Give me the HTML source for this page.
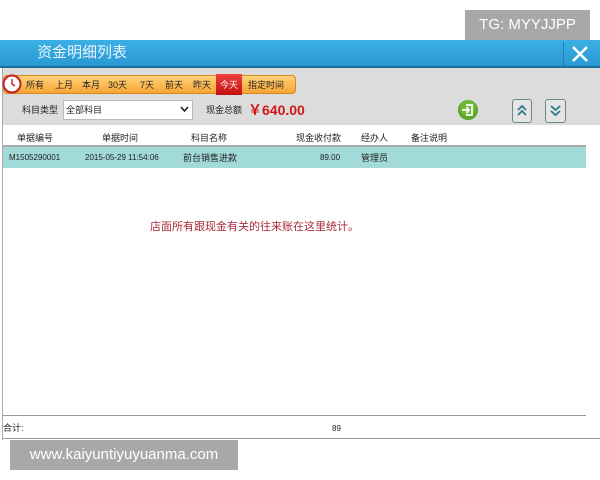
<!DOCTYPE html>
<html><head><meta charset="utf-8"><style>
*{margin:0;padding:0;box-sizing:border-box}
body{width:600px;height:480px;background:#fff;position:relative;overflow:hidden;font-family:"Liberation Sans","Noto Sans CJK SC",sans-serif;color:#222}
.a{position:absolute;white-space:nowrap}
.t{font-size:9px}
</style></head><body>
<div class="a" style="left:465px;top:10px;width:125px;height:30px;background:#a8a8a8;color:#fff;font-size:15px;line-height:30px;text-align:center">TG: MYYJJPP</div>
<div class="a" style="left:0;top:40px;width:600px;height:28px;background:linear-gradient(#3cb0e4,#2898d2);border-bottom:2px solid #1a6fa0"></div>
<div class="a" style="left:37px;top:43px;font-size:15px;color:#e8f4ff;line-height:20px">资金明细列表</div>
<div class="a" style="left:563px;top:42px;width:1px;height:24px;background:#1f80b8"></div>
<svg class="a" style="left:570px;top:44px" width="20" height="20"><path d="M3 3L17 17M17 3L3 17" stroke="#fff" stroke-width="2.6"/></svg>
<div class="a" style="left:2px;top:68px;width:598px;height:57px;background:#dcdcdc"></div>
<div class="a" style="left:2px;top:68px;width:1px;height:372px;background:#aaa"></div>
<div class="a" style="left:3px;top:75px;width:293px;height:19px;border-radius:4px;background:linear-gradient(#ffd27a,#f7a534);border:1px solid #d88a20"></div>
<div class="a" style="left:216px;top:74px;width:26px;height:21px;background:linear-gradient(#f04040,#c01010)"></div>
<svg class="a" style="left:2px;top:74px" width="20" height="20"><circle cx="10" cy="10" r="8.5" fill="#fff" stroke="#c02020" stroke-width="2"/><path d="M10 5V10L13 12" stroke="#c02020" stroke-width="1.4" fill="none"/></svg>
<div class="a t" style="top:79px;left:26px;line-height:12px;color:#222">所有</div>
<div class="a t" style="top:79px;left:55px;line-height:12px">上月</div>
<div class="a t" style="top:79px;left:82px;line-height:12px">本月</div>
<div class="a t" style="top:79px;left:108px;line-height:12px">30天</div>
<div class="a t" style="top:79px;left:140px;line-height:12px">7天</div>
<div class="a t" style="top:79px;left:165px;line-height:12px">前天</div>
<div class="a t" style="top:79px;left:193px;line-height:12px">昨天</div>
<div class="a t" style="top:79px;left:220px;line-height:12px;color:#fff">今天</div>
<div class="a t" style="top:79px;left:248px;line-height:12px">指定时间</div>
<div class="a t" style="top:104px;left:22px;line-height:12px">科目类型</div>
<div class="a" style="left:63px;top:100px;width:130px;height:20px;background:#fff;border:1px solid #bbb"></div>
<div class="a t" style="top:104px;left:66px;line-height:12px">全部科目</div>
<svg class="a" style="left:180px;top:106px" width="9" height="7"><path d="M1 1L4.5 5L8 1" stroke="#222" stroke-width="1.6" fill="none"/></svg>
<div class="a t" style="top:104px;left:206px;line-height:12px">现金总额</div>
<div class="a" style="top:102px;left:248px;font-size:14px;font-weight:bold;color:#d01818;line-height:16px">￥640.00</div>
<svg class="a" style="left:457px;top:99px" width="22" height="22"><circle cx="11" cy="11" r="10" fill="#5aa52a"/><circle cx="11" cy="9" r="8" fill="#7cc442" opacity=".6"/><path d="M9 6H15V16H9M5 11H12M9.5 8L12 11L9.5 14" stroke="#fff" stroke-width="1.8" fill="none"/></svg>
<div class="a" style="left:512px;top:99px;width:20px;height:24px;border:1px solid #6a8a8a;border-radius:3px;background:#e4e4e4"></div>
<svg class="a" style="left:512px;top:99px" width="20" height="24"><path d="M6 11L10 7L14 11M6 16L10 12L14 16" stroke="#2a7a8a" stroke-width="1.8" fill="none"/></svg>
<div class="a" style="left:545px;top:99px;width:21px;height:24px;border:1px solid #6a8a8a;border-radius:3px;background:#e4e4e4"></div>
<svg class="a" style="left:545px;top:99px" width="21" height="24"><path d="M6 7L10.5 11L15 7M6 12L10.5 16L15 12" stroke="#2a7a8a" stroke-width="1.8" fill="none"/></svg>
<div class="a t" style="top:131px;left:17px">单据编号</div>
<div class="a t" style="top:131px;left:102px">单据时间</div>
<div class="a t" style="top:131px;left:191px">科目名称</div>
<div class="a t" style="top:131px;left:296px">现金收付款</div>
<div class="a t" style="top:131px;left:361px">经办人</div>
<div class="a t" style="top:131px;left:411px">备注说明</div>
<div class="a" style="left:3px;top:145px;width:583px;height:2px;background:#aaa"></div>
<div class="a" style="left:3px;top:147px;width:583px;height:21px;background:#a2d9d9"></div>
<div class="a" style="top:152px;left:9px;font-size:8px;line-height:11px">M1505290001</div>
<div class="a" style="top:152px;left:85px;font-size:8px;line-height:11px">2015-05-29 11:54:06</div>
<div class="a t" style="top:152px;left:183px;line-height:12px">前台销售进款</div>
<div class="a" style="top:152px;left:320px;font-size:8px;line-height:11px">89.00</div>
<div class="a t" style="top:152px;left:361px;line-height:12px">管理员</div>
<div class="a" style="top:220px;left:150px;font-size:11px;color:#a82a3a;line-height:14px">店面所有跟现金有关的往来账在这里统计。</div>
<div class="a" style="left:3px;top:415px;width:583px;height:1px;background:#999"></div>
<div class="a t" style="top:422px;left:3px;line-height:12px">合计:</div>
<div class="a" style="top:423px;left:332px;font-size:8px;line-height:11px">89</div>
<div class="a" style="left:3px;top:438px;width:597px;height:1px;background:#999"></div>
<div class="a" style="left:10px;top:440px;width:228px;height:30px;background:#a8a8a8;color:#fff;font-size:15px;line-height:30px;text-align:center">www.kaiyuntiyuyuanma.com</div>
</body></html>
